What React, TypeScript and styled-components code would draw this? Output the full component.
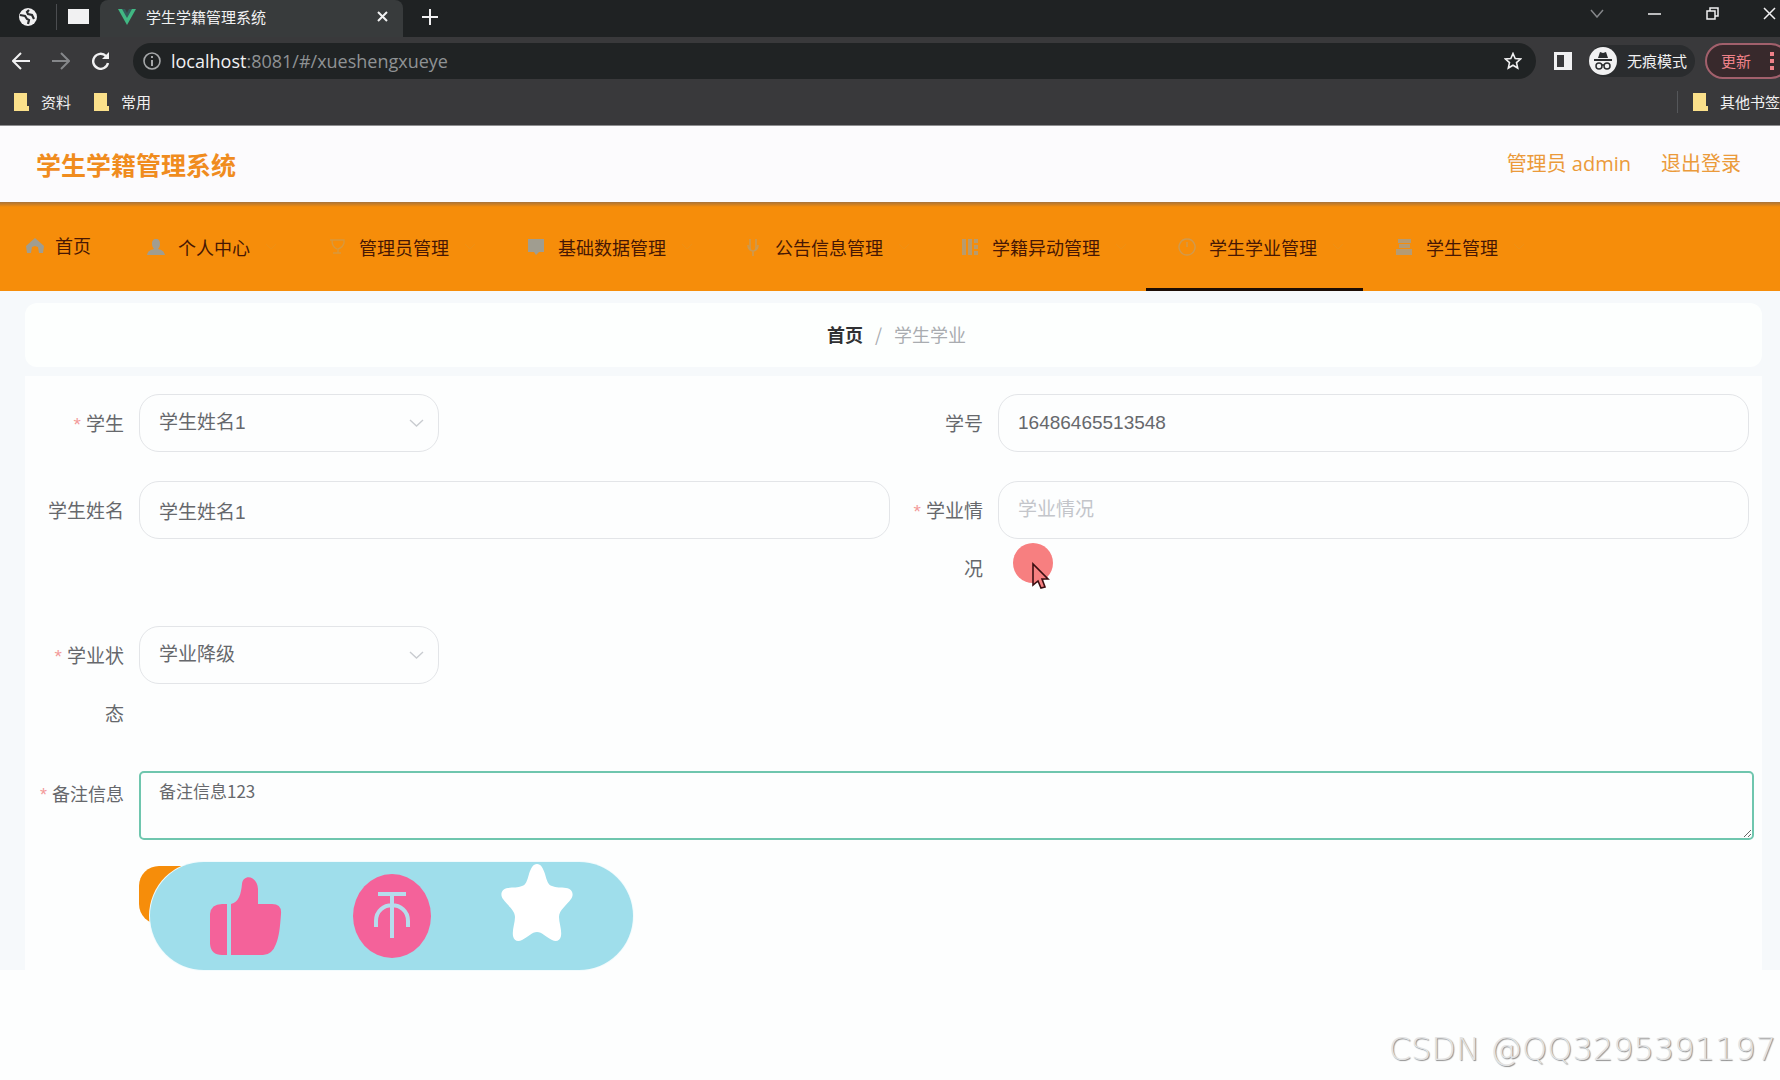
import React from 'react';
import styled, { createGlobalStyle } from 'styled-components';

const cjk = "'Noto Sans CJK SC', sans-serif";

const GlobalStyle = createGlobalStyle`
  *, *::before, *::after { box-sizing: border-box; }
  body { margin: 0; background: #fff; font-family: 'Liberation Sans', ${cjk}; }
  button, input, select, textarea { font: inherit; }
  button { cursor: pointer; }
`;

const Page = styled.div`
  position: relative;
  min-height: 100vh;
  overflow: hidden;
  background: #fdfefe;
`;

/* ---------- browser frame ---------- */

const Browser = styled.div`
  background: #39393b;
  border-bottom: 1px solid #8e8e90;
  color: #f1f1f2;
  font: 15px/20px ${cjk};
  overflow: hidden;
`;

const Bar = styled.div`
  display: flex;
  align-items: center;
`;

const TabStrip = styled(Bar)`
  height: 37px;
  padding-bottom: 4px;
  background: #1f2223;
`;

const WindowControls = styled(Bar)`
  margin-right: -17px;
  padding-bottom: 6px;
`;

const PlainButton = styled.button<{ $w?: number; $dim?: boolean }>`
  display: flex;
  flex: none;
  align-items: center;
  justify-content: center;
  width: ${(p) => p.$w ?? 32}px;
  height: 32px;
  padding: 0;
  border: 0;
  background: none;
  color: ${(p) => (p.$dim ? '#85878a' : '#f1f1f2')};
`;

const PinDivider = styled.span`
  width: 1px;
  height: 26px;
  background: #4b4d50;
`;

const Tab = styled.div`
  display: flex;
  align-items: center;
  align-self: stretch;
  width: 303px;
  margin-bottom: -4px;
  padding: 0 5px 4px 18px;
  gap: 10px;
  background: #383b3c;
  border-radius: 8px 8px 0 0;
`;

const TabTitle = styled.span`
  flex: 1;
`;

const Spacer = styled.span`
  flex: 1;
`;

const Toolbar = styled(Bar)`
  height: 48px;
  padding-left: 2px;
`;

const Address = styled.div`
  display: flex;
  flex: 1;
  align-items: center;
  height: 36px;
  margin: 0 11px 0 13px;
  padding: 0 7px 0 10px;
  gap: 10px;
  border-radius: 18px;
  background: #202324;
`;

const Url = styled.div`
  flex: 1;
  color: #8f9294;
  font: 18px/26px 'Open Sans', sans-serif;
  outline: none;

  b { color: #f1f1f2; font-weight: 400; }
`;

const Incognito = styled.button`
  display: flex;
  align-items: center;
  height: 32px;
  margin: 0 10px 0 10px;
  padding: 0 8px 0 0;
  gap: 10px;
  border: 0;
  border-radius: 16px;
  background: #2a2c2e;
  color: #f1f1f2;
`;

const Update = styled.button`
  display: flex;
  flex: none;
  align-items: center;
  justify-content: space-between;
  width: 84px;
  height: 36px;
  margin-right: -9px;
  padding: 0 13px 0 14px;
  border: 2px solid #a2606c;
  border-radius: 18px;
  background: #38292c;
  color: #ee8189;
`;

const Bookmarks = styled(Bar)`
  height: 40px;
  padding: 0 0 6px 13px;
  gap: 22px;
`;

const Bookmark = styled.a`
  display: flex;
  align-items: center;
  gap: 12px;
  color: inherit;
  text-decoration: none;
`;

const BookmarkRule = styled.span`
  width: 1px;
  height: 22px;
  margin-right: -8px;
  background: #55575a;
`;

/* ---------- application ---------- */

const Header = styled.header`
  display: flex;
  align-items: center;
  justify-content: space-between;
  height: 76px;
  padding: 0 39px 0 36px;
  background: #fcfbfd;
`;

const Title = styled.h1`
  margin: 0;
  color: #f08c1e;
  font: 700 25px/36px ${cjk};
`;

const Account = styled.div`
  display: flex;
  gap: 30px;
  color: #eb9a3a;
  font: 20px/28px 'Open Sans', ${cjk};
`;

const Logout = styled.a`
  color: inherit;
  text-decoration: none;
`;

const Nav = styled.nav`
  display: flex;
  height: 89px;
  background: linear-gradient(#a8733a, #f68d0a 5px);
`;

const NavItem = styled.a<{ $active?: boolean; $home?: boolean }>`
  display: flex;
  align-items: center;
  gap: ${(p) => (p.$home ? 10 : 12)}px;
  padding: ${(p) => (p.$home ? '0 24px 0 25px' : '3px 19px 0 31px')};
  border-bottom: 3px solid ${(p) => (p.$active ? '#1c0d05' : 'transparent')};
  color: #471704;
  font: 18px/26px ${cjk};
  text-decoration: none;
  white-space: nowrap;

  svg { flex: none; }
`;

const Arrow = styled.svg`
  margin-left: 3px;
  color: #ee9015;
`;

const Main = styled.main`
  display: flex;
  flex-direction: column;
  gap: 9px;
  padding: 12px 18px 0 25px;
  background: #f6f9fb;
`;

const Crumbs = styled.nav`
  display: flex;
  align-items: center;
  justify-content: center;
  gap: 12px;
  height: 64px;
  padding: 0 0 2px 6px;
  border-radius: 12px;
  background: #fdfffe;
  color: #a9acb0;
  font: 18px/26px ${cjk};
`;

const CrumbHome = styled.a`
  color: #303133;
  font-weight: 700;
  text-decoration: none;
`;

const Card = styled.form`
  padding: 18px 8px 46px 6px;
  background: #fdfefe;
`;

const Pair = styled.div`
  display: grid;
  grid-template-columns: 1fr 1fr;
  padding-right: 5px;
`;

const Field = styled.div`
  display: grid;
  grid-template-columns: 108px 1fr;
  align-items: start;
  margin-bottom: 29px;
`;

const Label = styled.label<{ $compact?: boolean }>`
  padding: 0 15px 0 5px;
  color: #66686c;
  font: ${(p) => (p.$compact ? '18px/44px' : '19px/58px')} ${cjk};
  text-align: right;
`;

const Star = styled.span`
  margin-right: 5px;
  color: #f39a9a;
  font-family: 'Liberation Sans', sans-serif;
  line-height: 1;
`;

const Input = styled.input`
  width: 100%;
  height: 58px;
  padding: 0 19px;
  border: 1px solid #e3e5e8;
  border-radius: 20px;
  background: #fdfefe;
  color: #66686c;
  font: 19px/28px 'Liberation Sans', ${cjk};
  outline: none;

  &::placeholder { color: #c3c5ca; opacity: 1; }
`;

const SelectWrap = styled.div`
  display: grid;
  width: 300px;
  align-items: center;

  > * { grid-area: 1 / 1; }
  > svg { justify-self: end; margin-right: 15px; pointer-events: none; }
`;

const Select = styled(Input).attrs({ as: 'select' })`
  appearance: none;
`;

const Area = styled.textarea`
  display: block;
  width: 100%;
  height: 69px;
  padding: 5px 18px;
  border: 2px solid #6fc6ae;
  border-radius: 5px;
  background: #fdfefe;
  color: #66686c;
  font: 17px/25px ${cjk};
  outline: none;
  resize: vertical;
`;

const Actions = styled.div`
  position: relative;
  margin: -3px 0 0 108px;
`;

const Submit = styled.button`
  display: block;
  width: 120px;
  height: 58px;
  border: 0;
  border-radius: 20px;
  background: #f68d0a;
`;

/* floating like / coin / favourite pill that covers the form buttons */
const Reactions = styled.div`
  position: absolute;
  left: 11px;
  top: -4px;
  display: flex;
  align-items: flex-start;
  width: 483px;
  height: 108px;
  padding: 0 60px;
  justify-content: space-between;
  border-radius: 54px;
  background: #9fdeeb;
  box-shadow: 0 0 0 1px #f2fbfd;
`;

const Reaction = styled.button<{ $top: number }>`
  display: block;
  margin-top: ${(p) => p.$top}px;
  padding: 0;
  border: 0;
  background: none;

  svg { display: block; }
`;

const Pointer = styled.svg`
  position: absolute;
  left: 14px;
  top: 61px;
  pointer-events: none;
`;

const Control = styled.div`
  position: relative;
`;

const Watermark = styled.div`
  position: absolute;
  right: 4px;
  bottom: 11px;
  color: #e3e3e3;
  font: 200 32px/40px 'DejaVu Sans', sans-serif;
  text-shadow: 1px 1px 1px #8d8d8d;
  white-space: nowrap;
`;

/* ---------- drawings ---------- */

const Globe = () => (
  <svg width="18" height="18" viewBox="0 0 18 18">
    <circle cx="9" cy="9" r="9" fill="#f1f1f2" />
    <path d="M1 7l5 1 2 3 2 1-1 4M10 2L8 4l1 2 4 1 2 4" fill="none" stroke="#2a2c2e" strokeWidth="2.2" />
  </svg>
);

const Folder = () => (
  <svg width="16" height="18" viewBox="0 0 16 18">
    <path d="M1 0h13v13h2v5H1z" fill="#fbe08a" />
  </svg>
);

const Chevron = () => (
  <svg width="15" height="9" viewBox="0 0 15 9" fill="none" stroke="#c9ccd0" strokeWidth="1.4">
    <path d="M1 1l6.500 6L14 1" />
  </svg>
);

const navIcons: Record<string, React.ReactNode> = {
  home: <path d="M1 11L10 3l9 8-1 7h-4l-1-6-3-1-3 1-1 6H2z" fill="#a09d90" />,
  user: <path d="M10 2c3 0 4 2 4 5 0 2-1 4-2 5 4 1 6 2 7 6H1c1-4 3-5 7-6-1-1-2-3-2-5 0-3 1-5 4-5z" fill="#a09d90" />,
  trophy: <path d="M3 3h14v3c-1 4-3 5-6 6v4h3M6 16h5M5 3c0 5 2 8 5 9" fill="none" stroke="#d9983c" strokeWidth="1.400" />,
  board: <path d="M2 2h16v13h-5l-3 3-2-3H2z" fill="#a09d90" />,
  mic: <path d="M7 2v9c0 4 6 4 6 0V2M5 8c0 8 10 8 10 0M10 14v5" fill="none" stroke="#cc9a52" strokeWidth="1.600" />,
  grid: <path d="M2 2h4v16H2zM8 2h4v16H8zM14 2h4v4h-4zM14 8h4v4h-4zM14 14h4v4h-4z" fill="#b89b6e" />,
  clock: <path d="M10 2a8 8 0 1 0 .1 0M10 5v5" fill="none" stroke="#cf9a50" strokeWidth="1.400" />,
  list: <path d="M4 2h13v4H4zM5 7h11v4H5zM2 12h16v6H2z" fill="#b59b74" />,
};

const NavIcon = ({ name }: { name: string }) => (
  <svg width="20" height="20" viewBox="0 0 20 20">{navIcons[name]}</svg>
);

const menu = [
  { icon: 'user', text: '个人中心' },
  { icon: 'trophy', text: '管理员管理' },
  { icon: 'board', text: '基础数据管理' },
  { icon: 'mic', text: '公告信息管理' },
  { icon: 'grid', text: '学籍异动管理' },
  { icon: 'clock', text: '学生学业管理', active: true },
  { icon: 'list', text: '学生管理' },
];

const line = { fill: 'none', stroke: 'currentColor', strokeWidth: 2 };

const BrowserFrame = () => (
  <Browser>
    <TabStrip>
      <PlainButton $w={56} aria-label="global"><Globe /></PlainButton>
      <PinDivider />
      <PlainButton $w={43} aria-label="pinned">
        <svg width="21" height="15"><rect width="21" height="15" fill="#f1f1f2" /></svg>
      </PlainButton>
      <Tab>
        <svg width="18" height="16" viewBox="0 0 18 16">
          <path d="M0 0h6l3 6 3-6h6L9 16z" fill="#41b883" />
          <path d="M4 0h3l2 4 2-4h3L9 9z" fill="#34595a" />
        </svg>
        <TabTitle>学生学籍管理系统</TabTitle>
        <PlainButton aria-label="close tab">
          <svg width="11" height="11" {...line}><path d="M1 1l9 9M10 1l-9 9" /></svg>
        </PlainButton>
      </Tab>
      <PlainButton $w={54} aria-label="new tab">
        <svg width="16" height="16" {...line}><path d="M8 0v16M0 8h16" /></svg>
      </PlainButton>
      <Spacer />
      <WindowControls>
        <PlainButton $w={56} aria-label="search tabs" $dim>
          <svg width="14" height="9" {...line} strokeWidth={1.5}><path d="M1 1l6 7 6-7" /></svg>
        </PlainButton>
        <PlainButton $w={58} aria-label="minimize">
          <svg width="13" height="2"><path d="M0 1h13" stroke="currentColor" strokeWidth="1.500" /></svg>
        </PlainButton>
        <PlainButton $w={58} aria-label="restore">
          <svg width="13" height="13" {...line} strokeWidth={1.5}><path d="M1 4h8v8H1zM4 4V1h8v8H9" /></svg>
        </PlainButton>
        <PlainButton $w={56} aria-label="close">
          <svg width="13" height="13" {...line} strokeWidth={1.5}><path d="M1 1l11 11M12 1L1 12" /></svg>
        </PlainButton>
      </WindowControls>
    </TabStrip>
    <Toolbar>
      <PlainButton $w={38} aria-label="back">
        <svg width="18" height="18" {...line}><path d="M18 9H2M9 1L1 9l8 8" /></svg>
      </PlainButton>
      <PlainButton $w={42} aria-label="forward" $dim>
        <svg width="18" height="18" {...line}><path d="M0 9h16M9 1l8 8-8 8" /></svg>
      </PlainButton>
      <PlainButton $w={38} aria-label="reload">
        <svg width="18" height="18" viewBox="0 0 18 18" {...line} strokeWidth={2.4}>
          <path d="M16 11a7.500 7.500 0 1 1-2-7l2 2" />
          <path d="M17 0v7h-7z" fill="currentColor" stroke="none" />
        </svg>
      </PlainButton>
      <Address>
        <svg width="18" height="18" fill="none" stroke="#a5a7a9" strokeWidth="1.600">
          <circle cx="9" cy="9" r="8" /><path d="M9 8v6M9 4v2" strokeWidth="2" />
        </svg>
        <Url role="textbox" aria-label="address"><b>localhost</b>:8081/#/xueshengxueye</Url>
        <PlainButton aria-label="bookmark page">
          <svg width="18" height="18" viewBox="0 0 18 18" {...line} strokeWidth={1.6}>
            <path d="M9 1.500l2.200 5 5.300.5-4 3.600 1.200 5.400L9 13.200 4.300 16l1.200-5.400-4-3.600 5.300-.5z" />
          </svg>
        </PlainButton>
      </Address>
      <PlainButton $w={32} aria-label="side panel">
        <svg width="18" height="18"><path d="M0 0h18v18H0zM3 3v12h7V3z" fill="#f1f1f2" fillRule="evenodd" /></svg>
      </PlainButton>
      <Incognito>
        <svg width="28" height="28" viewBox="0 0 28 28">
          <circle cx="14" cy="14" r="14" fill="#f1f1f2" />
          <path d="M9 11l2-6 3 1 3-1 2 6zM5 12h18v2H5z" fill="#2a2c2e" />
          <g fill="none" stroke="#2a2c2e" strokeWidth="1.500"><circle cx="10" cy="19" r="3" /><circle cx="18" cy="19" r="3" /><path d="M13 18h2" /></g>
        </svg>
        无痕模式
      </Incognito>
      <Update>
        更新
        <svg width="4" height="18" fill="currentColor"><path d="M0 0h4v4H0zM0 7h4v4H0zM0 14h4v4H0z" /></svg>
      </Update>
    </Toolbar>
    <Bookmarks>
      <Bookmark href="#"><Folder />资料</Bookmark>
      <Bookmark href="#"><Folder />常用</Bookmark>
      <Spacer />
      <BookmarkRule />
      <Bookmark href="#"><Folder />其他书签</Bookmark>
    </Bookmarks>
  </Browser>
);

export default function App() {
  return (
    <Page>
      <GlobalStyle />
      <BrowserFrame />
      <Header>
        <Title>学生学籍管理系统</Title>
        <Account>
          <span>管理员 admin</span>
          <Logout href="#">退出登录</Logout>
        </Account>
      </Header>
      <Nav>
        <NavItem href="#" $home><NavIcon name="home" />首页</NavItem>
        {menu.map((m) => (
          <NavItem key={m.text} href="#" $active={m.active}>
            <NavIcon name={m.icon} />
            {m.text}
            <Arrow width="12" height="8" {...line} strokeWidth={1}><path d="M1 1l5 5 5-5" /></Arrow>
          </NavItem>
        ))}
      </Nav>
      <Main>
        <Crumbs>
          <CrumbHome href="#">首页</CrumbHome>
          <span>/</span>
          <span>学生学业</span>
        </Crumbs>
        <Card>
          <Pair>
            <Field>
              <Label htmlFor="student"><Star>*</Star>学生</Label>
              <SelectWrap>
                <Select id="student"><option>学生姓名1</option></Select>
                <Chevron />
              </SelectWrap>
            </Field>
            <Field>
              <Label htmlFor="number">学号</Label>
              <Input id="number" defaultValue="16486465513548" />
            </Field>
          </Pair>
          <Pair>
            <Field>
              <Label htmlFor="name">学生姓名</Label>
              <Input id="name" defaultValue="学生姓名1" />
            </Field>
            <Field>
              <Label htmlFor="study"><Star>*</Star>学业情况</Label>
              <Control>
                <Input id="study" placeholder="学业情况" />
                <Pointer width="44" height="52" viewBox="0 0 44 52">
                  <circle cx="21" cy="21" r="20" fill="#f77f80" />
                  <path d="M21 22v21l5-4 3 7 4-1-3-8h6z" fill="#f77f80" stroke="#3b0f12" strokeWidth="1.600" />
                </Pointer>
              </Control>
            </Field>
          </Pair>
          <Pair>
            <Field>
              <Label htmlFor="state"><Star>*</Star>学业状态</Label>
              <SelectWrap>
                <Select id="state"><option>学业降级</option></Select>
                <Chevron />
              </SelectWrap>
            </Field>
          </Pair>
          <Field>
            <Label htmlFor="remark" $compact><Star>*</Star>备注信息</Label>
            <Area id="remark" defaultValue="备注信息123" />
          </Field>
          <Actions>
            <Submit type="button" aria-label="submit" />
            <Reactions>
              <Reaction type="button" aria-label="like" $top={15}>
                <svg width="72" height="78" viewBox="0 0 72 78" fill="#f4629a">
                  <path d="M17 27v51h-5Q1 78 0 67V37Q1 27 12 27z" />
                  <path d="M21 27c8-2 10-10 11-20 1-10 15-9 16 5v15h14q10 0 9 10c-1 14-2 23-5 30q-4 11-13 11H21z" />
                </svg>
              </Reaction>
              <Reaction type="button" aria-label="coin" $top={12}>
                <svg width="78" height="84" viewBox="0 0 78 84">
                  <ellipse cx="39" cy="42" rx="39" ry="42" fill="#f4629a" />
                  <g fill="none" stroke="#b5dcec" strokeWidth="4">
                    <path d="M25 20h28M39 20v44M23 53V47c0-21 32-21 32 0v6" />
                  </g>
                </svg>
              </Reaction>
              <Reaction type="button" aria-label="favourite" $top={2}>
                <svg width="72" height="78" viewBox="0 0 72 78">
                  <path
                    d="M36 0c4 0 6 4 8 10 2 7 3 11 7 12 4 2 9 1 14 2 7 1 8 7 5 11-4 6-12 11-12 18 0 6 3 13 2 19-1 5-5 6-9 4-6-3-10-8-15-8s-9 5-15 8c-4 2-8 1-9-4-1-6 2-13 2-19 0-7-8-12-12-18-3-4-2-10 5-11 5-1 10 0 14-2 4-1 5-5 7-12 2-6 4-10 8-10z"
                    fill="#fff"
                  />
                </svg>
              </Reaction>
            </Reactions>
          </Actions>
        </Card>
      </Main>
      <Watermark>CSDN @QQ3295391197</Watermark>
    </Page>
  );
}
